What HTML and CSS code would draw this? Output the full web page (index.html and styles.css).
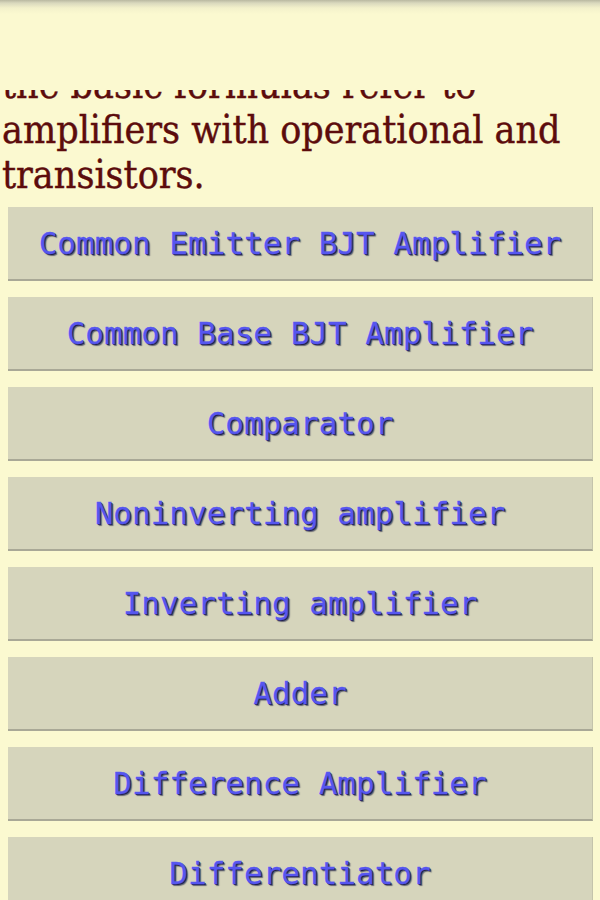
FILE: index.html
```html
<!DOCTYPE html>
<html lang="en">
<head>
<meta charset="utf-8">
<title>Amplifier formulas</title>
<link rel="stylesheet" href="styles.css">
</head>
<body>
<div class="screen">
  <main class="content">
    <p class="intro">the basic formulas refer to<br>amplifiers with operational and<br>transistors.</p>
    <nav class="menu">
      <button class="menu-btn">Common Emitter BJT Amplifier</button>
      <button class="menu-btn">Common Base BJT Amplifier</button>
      <button class="menu-btn">Comparator</button>
      <button class="menu-btn">Noninverting amplifier</button>
      <button class="menu-btn">Inverting amplifier</button>
      <button class="menu-btn">Adder</button>
      <button class="menu-btn">Difference Amplifier</button>
      <button class="menu-btn">Differentiator</button>
    </nav>
  </main>
  <header class="topbar"></header>
</div>
</body>
</html>
```

FILE: styles.css
```css
html, body {
  margin: 0;
  padding: 0;
  height: 100%;
}
body {
  background: #fbf9d0;
  overflow: hidden;
}
.screen {
  position: relative;
  width: 600px;
  height: 900px;
  overflow: hidden;
  background: #fbf9d0;
}
.topbar {
  position: absolute;
  top: 0;
  left: 0;
  right: 0;
  height: 90px;
  background: linear-gradient(to bottom, #b9b8a1 0px, #d9d8bd 3px, #f3f1cb 8px, #fbf9d0 14px, #fbf9d0 100%);
}
.content {
  display: flex;
  flex-direction: column;
  padding-top: 62px;
}
.intro {
  margin: 0;
  padding-left: 2px;
  font-family: "DejaVu Serif", "Liberation Serif", serif;
  font-stretch: condensed;
  font-size: 39px;
  line-height: 45px;
  color: #5c0c0c;
  -webkit-text-stroke: 0.4px #5c0c0c;
  white-space: nowrap;
}
.menu {
  display: flex;
  flex-direction: column;
  gap: 16px;
  margin: 10px 7px 0 8px;
}
.menu-btn {
  height: 74px;
  margin: 0;
  padding: 0;
  border: none;
  border-bottom: 2px solid #a9a896;
  border-right: 1px solid #c4c3ab;
  background: #d6d5bc;
  font-family: "DejaVu Sans Mono", "Liberation Mono", monospace;
  font-size: 31px;
  color: #5656f0;
  -webkit-text-stroke: 0.3px #5656f0;
  text-shadow: 1px 1px 0 #20204c, 2px 2px 1px rgba(10, 10, 50, 0.55);
  text-align: center;
  cursor: pointer;
}
```
